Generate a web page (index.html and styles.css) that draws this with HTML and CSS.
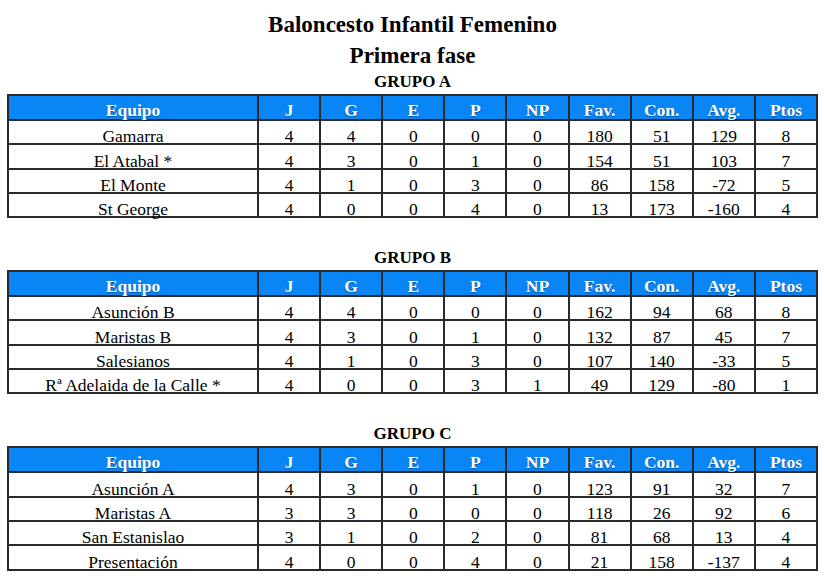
FILE: index.html
```html
<!DOCTYPE html>
<html lang="es">
<head>
<meta charset="utf-8">
<title>Baloncesto Infantil Femenino</title>
<link rel="stylesheet" href="styles.css">
</head>
<body>
<div class="page">
  <h1 class="title">Baloncesto Infantil Femenino</h1>
  <h2 class="subtitle">Primera fase</h2>

  <section class="group first">
    <h3 class="group-name">GRUPO A</h3>
    <table class="standings">
      <colgroup><col class="c-team"><col><col><col><col><col><col><col><col><col></colgroup>
      <thead><tr><th>Equipo</th><th>J</th><th>G</th><th>E</th><th>P</th><th>NP</th><th>Fav.</th><th>Con.</th><th>Avg.</th><th>Ptos</th></tr></thead>
      <tbody>
        <tr><td>Gamarra</td><td>4</td><td>4</td><td>0</td><td>0</td><td>0</td><td>180</td><td>51</td><td>129</td><td>8</td></tr>
        <tr><td>El Atabal *</td><td>4</td><td>3</td><td>0</td><td>1</td><td>0</td><td>154</td><td>51</td><td>103</td><td>7</td></tr>
        <tr><td>El Monte</td><td>4</td><td>1</td><td>0</td><td>3</td><td>0</td><td>86</td><td>158</td><td>-72</td><td>5</td></tr>
        <tr><td>St George</td><td>4</td><td>0</td><td>0</td><td>4</td><td>0</td><td>13</td><td>173</td><td>-160</td><td>4</td></tr>
      </tbody>
    </table>
  </section>

  <section class="group">
    <h3 class="group-name">GRUPO B</h3>
    <table class="standings">
      <colgroup><col class="c-team"><col><col><col><col><col><col><col><col><col></colgroup>
      <thead><tr><th>Equipo</th><th>J</th><th>G</th><th>E</th><th>P</th><th>NP</th><th>Fav.</th><th>Con.</th><th>Avg.</th><th>Ptos</th></tr></thead>
      <tbody>
        <tr><td>Asunción B</td><td>4</td><td>4</td><td>0</td><td>0</td><td>0</td><td>162</td><td>94</td><td>68</td><td>8</td></tr>
        <tr><td>Maristas B</td><td>4</td><td>3</td><td>0</td><td>1</td><td>0</td><td>132</td><td>87</td><td>45</td><td>7</td></tr>
        <tr><td>Salesianos</td><td>4</td><td>1</td><td>0</td><td>3</td><td>0</td><td>107</td><td>140</td><td>-33</td><td>5</td></tr>
        <tr><td>Rª Adelaida de la Calle *</td><td>4</td><td>0</td><td>0</td><td>3</td><td>1</td><td>49</td><td>129</td><td>-80</td><td>1</td></tr>
      </tbody>
    </table>
  </section>

  <section class="group">
    <h3 class="group-name">GRUPO C</h3>
    <table class="standings">
      <colgroup><col class="c-team"><col><col><col><col><col><col><col><col><col></colgroup>
      <thead><tr><th>Equipo</th><th>J</th><th>G</th><th>E</th><th>P</th><th>NP</th><th>Fav.</th><th>Con.</th><th>Avg.</th><th>Ptos</th></tr></thead>
      <tbody>
        <tr><td>Asunción A</td><td>4</td><td>3</td><td>0</td><td>1</td><td>0</td><td>123</td><td>91</td><td>32</td><td>7</td></tr>
        <tr><td>Maristas A</td><td>3</td><td>3</td><td>0</td><td>0</td><td>0</td><td>118</td><td>26</td><td>92</td><td>6</td></tr>
        <tr><td>San Estanislao</td><td>3</td><td>1</td><td>0</td><td>2</td><td>0</td><td>81</td><td>68</td><td>13</td><td>4</td></tr>
        <tr><td>Presentación</td><td>4</td><td>0</td><td>0</td><td>4</td><td>0</td><td>21</td><td>158</td><td>-137</td><td>4</td></tr>
      </tbody>
    </table>
  </section>
</div>
</body>
</html>
```

FILE: styles.css
```css
html, body {
  margin: 0;
  padding: 0;
  background: #ffffff;
}

body {
  font-family: "Liberation Serif", "Times New Roman", serif;
  color: #000;
}

.page {
  padding: 9px 0 0 7px;
  width: 811px;
}

.title,
.subtitle {
  margin: 0;
  font-size: 23px;
  font-weight: bold;
  line-height: 31px;
  text-align: center;
}

.group-name {
  margin: 0 0 2px;
  font-size: 17px;
  font-weight: bold;
  line-height: 21px;
  text-align: center;
}

.group {
  margin-top: 29px;
}

.group.first {
  margin-top: 0;
}

.standings {
  width: 811px;
  table-layout: fixed;
  border-collapse: collapse;
  border: 2px solid #555;
  font-size: 17.5px;
}

.standings .c-team {
  width: 250px;
}

.standings th,
.standings td {
  border: 2px solid #2a2a2a;
  padding: 0;
  text-align: center;
  vertical-align: bottom;
  white-space: nowrap;
}

.standings th {
  height: 22px;
  line-height: 16px;
  padding-bottom: 1px;
  background: #0a85f6;
  color: #ffffff;
  font-weight: bold;
  text-shadow: 0 1px 1px rgba(0, 0, 0, 0.35);
}

.standings td {
  height: 22.3px;
  line-height: 13px;
  font-weight: normal;
}
```
